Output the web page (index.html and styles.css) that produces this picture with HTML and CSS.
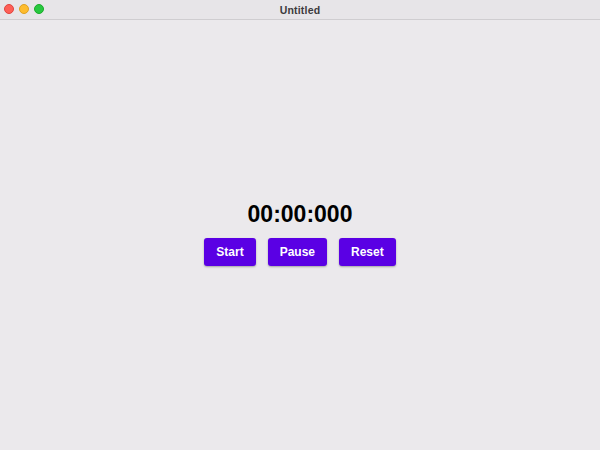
FILE: index.html
```html
<!DOCTYPE html>
<html>
<head>
<meta charset="utf-8">
<link rel="stylesheet" href="styles.css">
</head>
<body>
<div class="window">
  <div class="titlebar">
    <div class="lights">
      <span class="light red"></span>
      <span class="light yellow"></span>
      <span class="light green"></span>
    </div>
    <div class="title">Untitled</div>
  </div>
  <div class="content">
    <div class="stopwatch">
      <div class="time">00:00:000</div>
      <div class="buttons">
        <button class="btn">Start</button>
        <button class="btn">Pause</button>
        <button class="btn">Reset</button>
      </div>
    </div>
  </div>
</div>
</body>
</html>
```
FILE: styles.css
```css
html, body {
  margin: 0;
  padding: 0;
  width: 600px;
  height: 450px;
  overflow: hidden;
  font-family: "Liberation Sans", Arial, sans-serif;
  background: #ebe9ec;
}
.window {
  display: flex;
  flex-direction: column;
  width: 600px;
  height: 450px;
}
.titlebar {
  position: relative;
  height: 19px;
  background: #e7e5e8;
  border-bottom: 1px solid #cfcdd0;
  display: flex;
  align-items: center;
  justify-content: center;
  flex-shrink: 0;
}
.lights {
  position: absolute;
  left: 4px;
  top: 4px;
  display: flex;
  gap: 5px;
}
.light {
  width: 10px;
  height: 10px;
  border-radius: 50%;
  display: block;
  box-sizing: border-box;
}
.red { background: #fe5f57; border: 0.5px solid #e0443e; }
.yellow { background: #febc2e; border: 0.5px solid #dea123; }
.green { background: #28c840; border: 0.5px solid #1aab29; }
.title {
  font-size: 10.5px;
  font-weight: bold;
  color: #3c3a3d;
  letter-spacing: 0.2px;
}
.content {
  flex: 1;
  display: flex;
  align-items: center;
  justify-content: center;
}
.stopwatch {
  display: flex;
  flex-direction: column;
  align-items: center;
  gap: 10px;
  margin-top: -4px;
}
.time {
  font-size: 23px;
  font-weight: bold;
  color: #000;
  line-height: 28px;
}
.buttons {
  display: flex;
  gap: 12px;
}
.btn {
  height: 28px;
  padding: 0 12px;
  border: none;
  border-radius: 3px;
  background: #5a00e4;
  color: #fff;
  font-family: "Liberation Sans", Arial, sans-serif;
  font-size: 12px;
  font-weight: bold;
  box-shadow: 0 1px 2px rgba(0,0,0,0.3);
}
```
